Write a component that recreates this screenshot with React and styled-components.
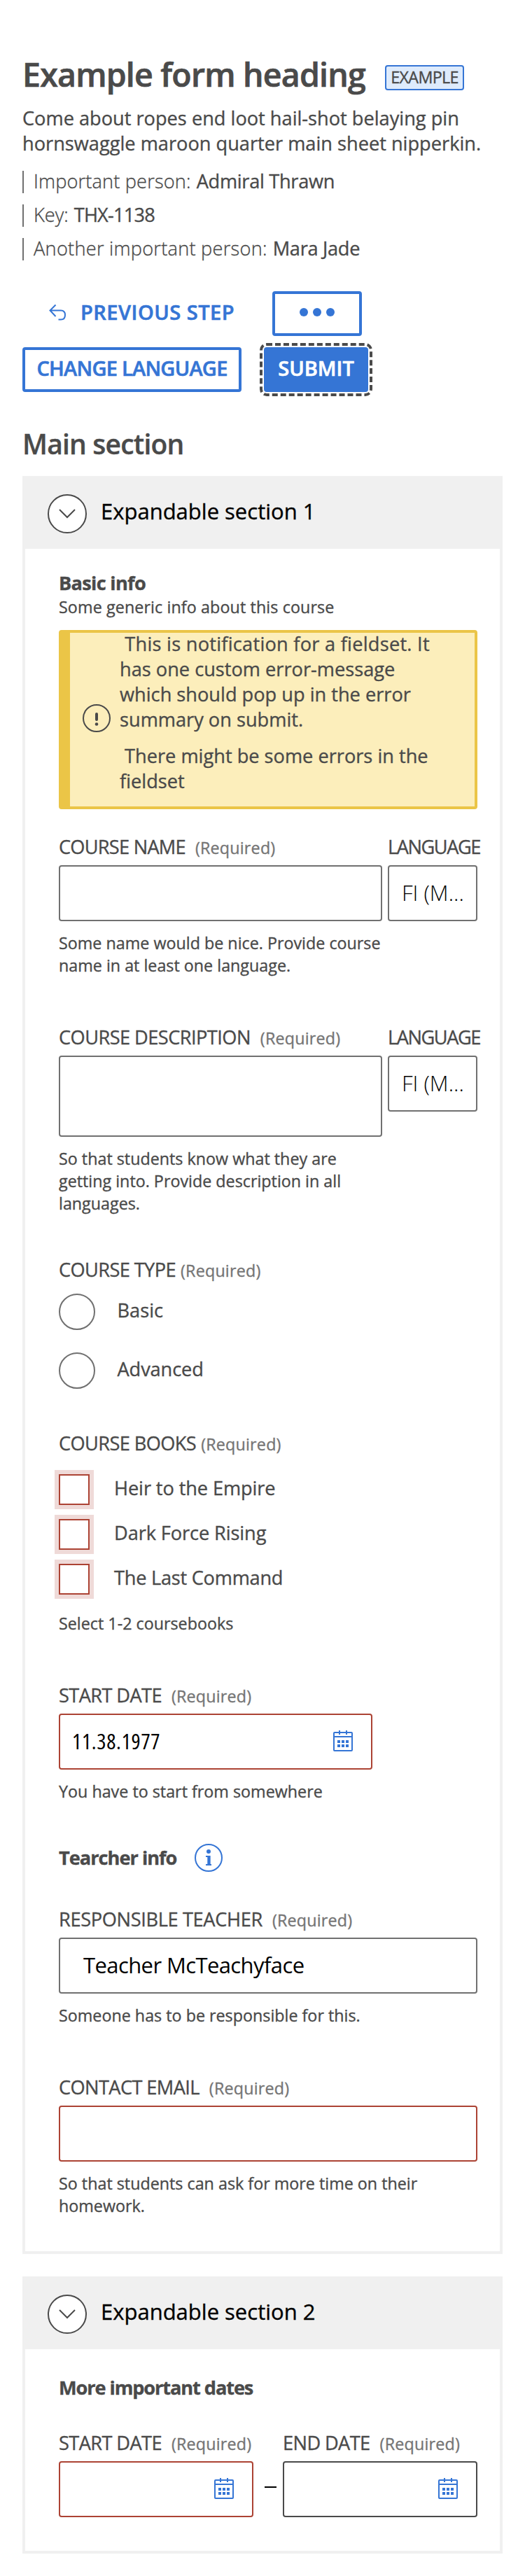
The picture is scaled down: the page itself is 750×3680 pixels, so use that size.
import React from "react";
import styled, { createGlobalStyle, css } from "styled-components";

const c = {
  blue: "#3575d5",
  text: "#4a4a4a",
  muted: "#757575",
  line: "#707070",
  red: "#ac4334",
  panel: "#f0f0f0",
};

const GlobalStyle = createGlobalStyle`
  * { box-sizing: border-box; }
  body {
    margin: 0;
    background: #fff;
    color: ${c.text};
    font-family: "Open Sans", "Noto Sans", sans-serif;
    font-size: 27.2px;
    line-height: 36px;
    -webkit-text-stroke-width: 0.35px;
  }
  h1, h2, h3, p, ul, fieldset { margin: 0; padding: 0; border: 0; }
  button, input { font: inherit; }
`;

const Page = styled.main`
  width: 750px;
  height: 3680px;
  padding: 76px 32px 32px;
`;

const Fit = styled.span`
  white-space: pre;
  letter-spacing: ${(p) => p.$ls || 0}px;
`;

const TitleRow = styled.header`
  display: grid;
  grid-template-columns: 518px 113px;
  height: 60px;
`;
const Title = styled.h1`
  font-size: 46.5px;
  line-height: 60px;
  font-weight: 600;
  -webkit-text-stroke-width: 0.7px;
`;
const Tag = styled.span`
  height: 36px;
  margin-top: 17px;
  border: 2px solid ${c.blue};
  border-radius: 4px;
  background: #deebfc;
  font-size: 23.3px;
  line-height: 31px;
  text-align: center;
`;
const Intro = styled.p`
  margin-top: 14.5px;
`;
const Facts = styled.ul`
  display: flex;
  flex-direction: column;
  gap: 16px;
  margin-top: 21.5px;
  list-style: none;
`;
const Fact = styled.li`
  display: flex;
  gap: 8px;
  height: 32px;
  padding-left: 14px;
  border-left: 2px solid ${c.line};
  line-height: 29px;
`;
const FactLabel = styled(Fit)`
  font-weight: 300;
`;

const Buttons = styled.div`
  display: flex;
  flex-direction: column;
  gap: 16px;
  margin-top: 44px;
`;
const ButtonRow = styled.div`
  display: flex;
  gap: 32px;
`;
const Button = styled.button`
  display: flex;
  align-items: center;
  justify-content: center;
  height: 64px;
  width: ${(p) => p.$w}px;
  padding: 0 0 4px;
  border: 4px solid ${c.blue};
  border-radius: 4px;
  background: #fff;
  color: ${c.blue};
  font-size: 29px;
  font-weight: 600;
  line-height: 40px;
  -webkit-text-stroke-width: 0.6px;
  ${(p) =>
    p.$kind === "plain" &&
    css`
      justify-content: flex-start;
      gap: 18px;
      padding-left: 34px;
      border-color: transparent;
    `}
  ${(p) =>
    p.$kind === "primary" &&
    css`
      background: ${c.blue};
      color: #fff;
      outline: 4px dashed ${c.text};
      outline-offset: 2px;
    `}
`;

const SectionTitle = styled.h2`
  margin: 48px 0 20px;
  font-size: 39px;
  line-height: 52px;
  font-weight: 600;
`;

const Card = styled.section`
  border: 4px solid ${c.panel};
  & + & { margin-top: 32px; }
`;
const CardHeader = styled.div`
  display: flex;
  align-items: center;
  gap: 20px;
  height: 100px;
  padding-left: 32px;
  background: ${c.panel};
`;
const CardTitle = styled.h2`
  padding-bottom: 8px;
  color: #000;
  font-size: 31px;
  font-weight: 400;
  line-height: 40px;
`;
const CardBody = styled.div`
  padding: ${(p) => p.$top}px 32px ${(p) => p.$bottom}px 48px;
`;
const GroupTitle = styled.h3`
  display: flex;
  align-items: center;
  gap: 26px;
  margin-top: ${(p) => p.$mt || 0}px;
  line-height: ${(p) => p.$lh || 36}px;
  font-size: 27.2px;
  font-weight: 700;
`;
const Small = styled.p`
  font-size: 23.3px;
  line-height: 32px;
  margin-top: ${(p) => p.$mt || 0}px;
`;

const Notice = styled.div`
  display: flex;
  gap: 13px;
  height: 256px;
  margin-top: 17px;
  padding-left: 18px;
  border: 4px solid #ebc547;
  border-left-width: 16px;
  border-radius: 4px;
  background: #fceebb;
`;
const NoticeIcon = styled.svg`
  flex: none;
  margin-top: 102px;
`;
const NoticeText = styled.div`
  display: flex;
  flex-direction: column;
  gap: 16px;
  margin-top: -1.5px;
`;

const Field = styled.div`
  margin-top: ${(p) => p.$mt || 0}px;
`;
const Label = styled.div`
  display: flex;
  height: 36px;
  margin-bottom: 8px;
  white-space: nowrap;
`;
const Req = styled.span`
  margin-left: ${(p) => (p.$tight ? 7 : 14)}px;
  color: ${c.muted};
  font-size: 23.3px;
  line-height: 38px;
  letter-spacing: 0.2px;
`;
const Split = styled.div`
  display: grid;
  grid-template-columns: 462px 128px;
  gap: 8px;
`;
const DateSplit = styled.div`
  display: grid;
  grid-template-columns: 278px 42px 278px;
  margin-top: 43px;
`;
const Dash = styled.span`
  width: 17px;
  height: 2px;
  margin: 80px 0 0 16px;
  background: #000;
`;
const Box = styled.div`
  display: flex;
  align-items: center;
  width: ${(p) => (p.$w ? p.$w + "px" : "100%")};
  height: ${(p) => p.$h || 80}px;
  padding: 0 26px 0 ${(p) => p.$pl || 18}px;
  border: 2px solid ${(p) => p.$line || c.line};
  border-radius: 4px;
  background: #fff;
  color: #000;
  font-size: 31px;
  font-weight: ${(p) => p.$weight || 400};
  line-height: 40px;
  white-space: nowrap;
  -webkit-text-stroke-width: 0;
`;
const Value = styled(Fit)`
  flex: 1;
  padding-bottom: 2px;
`;
const DateValue = styled(Value)`
  font-stretch: 75%;
`;

const Options = styled.div`
  display: flex;
  flex-direction: column;
  gap: ${(p) => p.$gap}px;
  margin-top: ${(p) => p.$mt}px;
`;
const Option = styled.label`
  display: flex;
  align-items: center;
  gap: ${(p) => p.$gap}px;
  span { padding-bottom: 3px; }
`;
const Radio = styled.i`
  width: 52px;
  height: 52px;
  border: 2px solid ${c.line};
  border-radius: 50%;
`;
const Check = styled.i`
  width: 44px;
  height: 44px;
  border: 2px solid ${c.red};
  box-shadow: 0 0 0 6px #efdad8;
`;

const Icon = styled.svg`
  flex: none;
  display: block;
`;
const CalendarIcon = styled(Icon)`
  margin-bottom: 2px;
`;

const Back = () => (
  <Icon width="27" height="24" viewBox="0 0 27 24" fill="none" stroke={c.blue} strokeWidth="2">
    <path d="M9.500 1.500L1.500 9.500L9.500 18M1.500 9.500H17C21.500 9.500 23 12.500 23 16S21.500 22.500 17 22.500H13.500" />
  </Icon>
);
const Dots = () => (
  <Icon width="52" height="12" viewBox="0 0 52 12" fill={c.blue}>
    <circle cx="7" cy="6" r="6" />
    <circle cx="26" cy="6" r="6" />
    <circle cx="45" cy="6" r="6" />
  </Icon>
);
const Chevron = () => (
  <Icon width="56" height="56" viewBox="0 0 56 56" fill="none" stroke={c.text} strokeWidth="2">
    <circle cx="28" cy="28" r="27" fill="#fff" />
    <path d="M17 22L28 33L39 22" />
  </Icon>
);
const Calendar = () => (
  <CalendarIcon width="28" height="30" viewBox="0 0 28 30" fill="none" stroke={c.blue} strokeWidth="2">
    <rect x="1" y="3" width="26" height="26" rx="1" />
    <path d="M1 9H27M9 0V6M19 0V6" />
    <path d="M6 16H22M6 22H22" strokeWidth="4" strokeDasharray="4 2" />
  </CalendarIcon>
);
const Info = () => (
  <Icon width="40" height="40" viewBox="0 0 40 40" fill="none" stroke={c.blue} strokeWidth="2">
    <circle cx="20" cy="20" r="19" />
    <circle cx="20" cy="11" r="3" fill={c.blue} stroke="none" />
    <path d="M16 18H21.500V30M16 30H24" />
    <path d="M20.300 17V31" strokeWidth="4" />
  </Icon>
);

function Section({ title, top, bottom, children }) {
  return (
    <Card>
      <CardHeader>
        <Chevron />
        <CardTitle>{title}</CardTitle>
      </CardHeader>
      <CardBody $top={top} $bottom={bottom}>{children}</CardBody>
    </Card>
  );
}

function FieldLabel({ text, ls = -0.6, required = true, tight }) {
  return (
    <Label>
      <Fit $ls={ls}>{text}</Fit>
      {required && <Req $tight={tight}>(Required)</Req>}
    </Label>
  );
}

function LanguageField() {
  return (
    <div>
      <FieldLabel text="LANGUAGE" ls={-1.45} required={false} />
      <Box $weight={300}><Value>FI (M...</Value></Box>
    </div>
  );
}

function DateBox({ value, ...rest }) {
  return (
    <Box $pl={17} {...rest}>
      <DateValue $ls={0.7}>{value}</DateValue>
      <Calendar />
    </Box>
  );
}

const facts = [
  ["Important person:", 0.15, "Admiral Thrawn", -0.3],
  ["Key:", 0, "THX-1138", -0.8],
  ["Another important person:", 0.25, "Mara Jade", -0.3],
];

export default function App() {
  return (
    <Page>
      <GlobalStyle />
      <TitleRow>
        <Title><Fit $ls={-0.8}>Example form heading</Fit></Title>
        <Tag><Fit $ls={-0.7}>EXAMPLE</Fit></Tag>
      </TitleRow>
      <Intro>
        <Fit>Come about ropes end loot hail-shot belaying pin</Fit><br />
        <Fit>hornswaggle maroon quarter main sheet nipperkin.</Fit>
      </Intro>
      <Facts>
        {facts.map(([k, kl, v, vl]) => (
          <Fact key={k}>
            <FactLabel $ls={kl}>{k}</FactLabel>
            <Fit $ls={vl}>{v}</Fit>
          </Fact>
        ))}
      </Facts>
      <Buttons>
        <ButtonRow>
          <Button $kind="plain" $w={325}><Back /><Fit $ls={0.5}>PREVIOUS STEP</Fit></Button>
          <Button $w={128}><Dots /></Button>
        </ButtonRow>
        <ButtonRow>
          <Button $w={313}><Fit $ls={-0.75}>CHANGE LANGUAGE</Fit></Button>
          <Button $kind="primary" $w={149}><Fit>SUBMIT</Fit></Button>
        </ButtonRow>
      </Buttons>

      <SectionTitle><Fit $ls={-0.8}>Main section</Fit></SectionTitle>

      <Section title="Expandable section 1" top={30.5} bottom={49}>
        <GroupTitle><Fit $ls={-0.7}>Basic info</Fit></GroupTitle>
        <Small><Fit $ls={0.1}>Some generic info about this course</Fit></Small>
        <Notice>
          <NoticeIcon width="40" height="40" viewBox="0 0 40 40" fill="none" stroke={c.text}>
            <circle cx="20" cy="20" r="19" strokeWidth="2" />
            <path d="M20 14V22" strokeWidth="4" strokeLinecap="round" />
            <circle cx="20" cy="28.500" r="2.300" fill={c.text} stroke="none" />
          </NoticeIcon>
          <NoticeText>
            <p>
              <Fit $ls={0.25}>{" This is notification for a fieldset. It"}</Fit><br />
              <Fit>has one custom error-message</Fit><br />
              <Fit>which should pop up in the error</Fit><br />
              <Fit>summary on submit.</Fit>
            </p>
            <p>
              <Fit>{" There might be some errors in the"}</Fit><br />
              <Fit>fieldset</Fit>
            </p>
          </NoticeText>
        </Notice>

        <Field $mt={36}>
          <Split>
            <div>
              <FieldLabel text="COURSE NAME" ls={-0.75} />
              <Box />
              <Small $mt={15}>
                <Fit>Some name would be nice. Provide course</Fit><br />
                <Fit>name in at least one language.</Fit>
              </Small>
            </div>
            <LanguageField />
          </Split>
        </Field>

        <Field $mt={69}>
          <Split>
            <div>
              <FieldLabel text="COURSE DESCRIPTION" ls={-0.55} />
              <Box $h={116} />
              <Small $mt={15}>
                <Fit>So that students know what they are</Fit><br />
                <Fit>getting into. Provide description in all</Fit><br />
                <Fit>languages.</Fit>
              </Small>
            </div>
            <LanguageField />
          </Split>
        </Field>

        <Field $mt={61.5}>
          <FieldLabel text="COURSE TYPE" tight />
          <Options $gap={32} $mt={15.5}>
            <Option $gap={31.5}><Radio /><Fit>Basic</Fit></Option>
            <Option $gap={31.5}><Radio /><Fit $ls={-0.1}>Advanced</Fit></Option>
          </Options>
        </Field>

        <Field $mt={60.5}>
          <FieldLabel text="COURSE BOOKS" tight />
          <Options $gap={20} $mt={25.5}>
            <Option $gap={35}><Check /><Fit $ls={-0.1}>Heir to the Empire</Fit></Option>
            <Option $gap={35}><Check /><Fit $ls={-0.1}>Dark Force Rising</Fit></Option>
            <Option $gap={35}><Check /><Fit $ls={-0.25}>The Last Command</Fit></Option>
          </Options>
          <Small $mt={25}><Fit>Select 1-2 coursebooks</Fit></Small>
        </Field>

        <Field $mt={69}>
          <FieldLabel text="START DATE" />
          <DateBox value="11.38.1977" $w={448} $line={c.red} />
          <Small $mt={15}><Fit>You have to start from somewhere</Fit></Small>
        </Field>

        <GroupTitle $mt={59} $lh={40}><Fit $ls={-1}>Tearcher info</Fit><Info /></GroupTitle>

        <Field $mt={50}>
          <FieldLabel text="RESPONSIBLE TEACHER" ls={-0.35} />
          <Box $pl={33}><Value $ls={-0.6}>Teacher McTeachyface</Value></Box>
          <Small $mt={15}><Fit>Someone has to be responsible for this.</Fit></Small>
        </Field>

        <Field $mt={69}>
          <FieldLabel text="CONTACT EMAIL" />
          <Box $line={c.red} />
          <Small $mt={15}>
            <Fit>So that students can ask for more time on their</Fit><br />
            <Fit>homework.</Fit>
          </Small>
        </Field>
      </Section>

      <Section title="Expandable section 2" top={37} bottom={48}>
        <GroupTitle><Fit $ls={-1.1}>More important dates</Fit></GroupTitle>
        <DateSplit>
          <div>
            <FieldLabel text="START DATE" />
            <DateBox value="" $line={c.red} />
          </div>
          <Dash />
          <div>
            <FieldLabel text="END DATE" />
            <DateBox value="" $line={c.text} />
          </div>
        </DateSplit>
      </Section>
    </Page>
  );
}
